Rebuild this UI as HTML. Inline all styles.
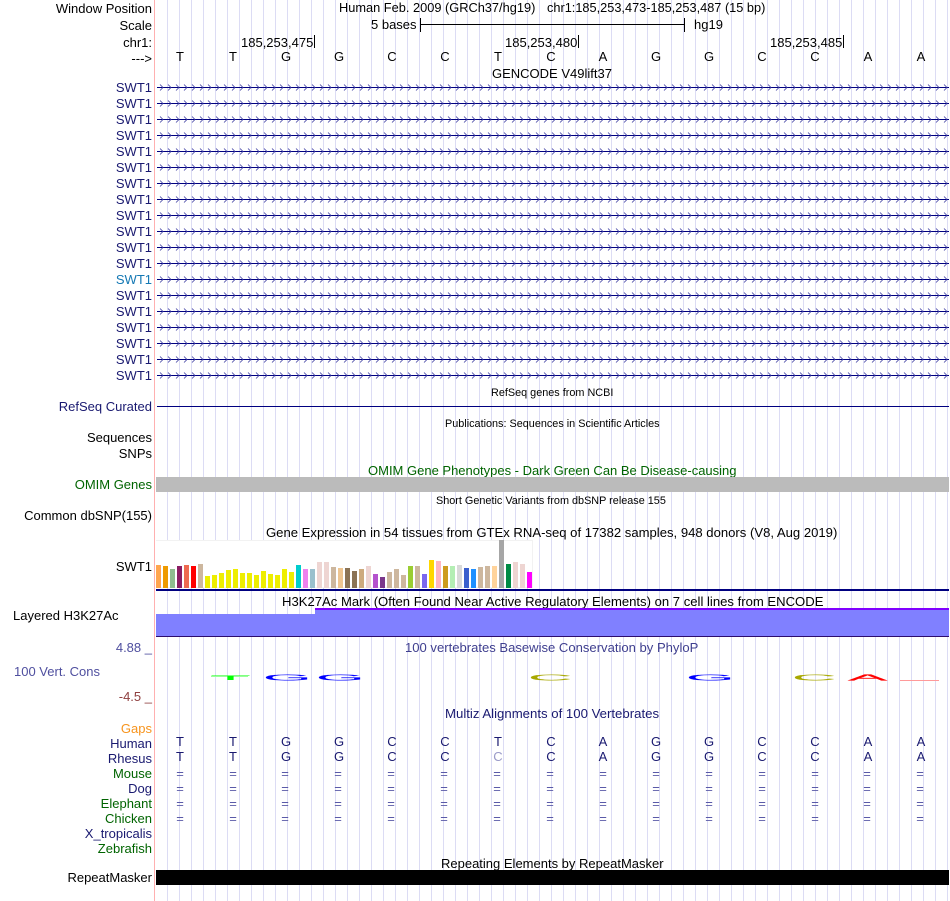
<!DOCTYPE html>
<html><head><meta charset="utf-8"><style>
html,body{margin:0;padding:0;background:#fff}
#p{position:relative;width:950px;height:901px;overflow:hidden;background:#fff;font:13px/14px "Liberation Sans",sans-serif;color:#000}
#p div{position:absolute}
.g{left:167px;top:0;width:783px;height:901px;background:repeating-linear-gradient(90deg,#dcdcf4 0,#dcdcf4 1px,transparent 1px,transparent 12px)}
.l{right:798px;white-space:nowrap;text-align:right;font-size:13px;margin-top:1px}
.t{white-space:nowrap;margin-top:1px}
.n{color:#191970}.d{color:#006400}
.s{font-size:10.85px}
.b{width:20px;text-align:center;font-size:13px}
.e{width:20px;text-align:center;color:#5a5aa8;font-size:13px}
.h{color:#191970}
.r{bottom:313px;width:5px}
</style></head><body><div id="p">
<div class="g"></div>
<div style="left:154px;top:0;width:1px;height:901px;background:#ffb0b0"></div>

<div class="l" style="top:1px">Window Position</div>
<div class="l" style="top:18px">Scale</div>
<div class="l" style="top:35px">chr1:</div>
<div class="l" style="top:51px">---&gt;</div>

<div class="t" style="left:339px;top:0;font-size:12.8px">Human Feb. 2009 (GRCh37/hg19)</div>
<div class="t" style="left:547px;top:0;font-size:12.75px">chr1:185,253,473-185,253,487 (15 bp)</div>
<div class="t" style="left:371px;top:17px">5 bases</div>
<div style="left:420px;top:18px;width:1px;height:14px;background:#000"></div>
<div style="left:420px;top:24px;width:264px;height:1px;background:#000"></div>
<div style="left:684px;top:18px;width:1px;height:14px;background:#000"></div>
<div class="t" style="left:694px;top:17px">hg19</div>
<div class="t" style="left:241px;top:35px">185,253,475</div><div style="left:314px;top:35px;width:1px;height:13px;background:#000"></div>
<div class="t" style="left:505px;top:35px">185,253,480</div><div style="left:578px;top:35px;width:1px;height:13px;background:#000"></div>
<div class="t" style="left:770px;top:35px">185,253,485</div><div style="left:843px;top:35px;width:1px;height:13px;background:#000"></div>

<div class="b" style="left:170px;top:50px">T</div><div class="b" style="left:223px;top:50px">T</div><div class="b" style="left:276px;top:50px">G</div><div class="b" style="left:329px;top:50px">G</div><div class="b" style="left:382px;top:50px">C</div><div class="b" style="left:435px;top:50px">C</div><div class="b" style="left:488px;top:50px">T</div><div class="b" style="left:541px;top:50px">C</div><div class="b" style="left:593px;top:50px">A</div><div class="b" style="left:646px;top:50px">G</div><div class="b" style="left:699px;top:50px">G</div><div class="b" style="left:752px;top:50px">C</div><div class="b" style="left:805px;top:50px">C</div><div class="b" style="left:858px;top:50px">A</div><div class="b" style="left:911px;top:50px">A</div>

<div class="t" style="left:492px;top:66px">GENCODE V49lift37</div>

<div class="l n" style="top:80px">SWT1</div><div class="l n" style="top:96px">SWT1</div><div class="l n" style="top:112px">SWT1</div><div class="l n" style="top:128px">SWT1</div><div class="l n" style="top:144px">SWT1</div><div class="l n" style="top:160px">SWT1</div><div class="l n" style="top:176px">SWT1</div><div class="l n" style="top:192px">SWT1</div><div class="l n" style="top:208px">SWT1</div><div class="l n" style="top:224px">SWT1</div><div class="l n" style="top:240px">SWT1</div><div class="l n" style="top:256px">SWT1</div><div class="l" style="top:272px;color:#1478b4">SWT1</div><div class="l n" style="top:288px">SWT1</div><div class="l n" style="top:304px">SWT1</div><div class="l n" style="top:320px">SWT1</div><div class="l n" style="top:336px">SWT1</div><div class="l n" style="top:352px">SWT1</div><div class="l n" style="top:368px">SWT1</div>

<svg style="position:absolute;left:0;top:0" width="950" height="901">
<defs><pattern id="a" patternUnits="userSpaceOnUse" x="159" y="80" width="8" height="16">
<rect x="0" y="7" width="8" height="1" fill="#000080"/>
<path d="M1 4.500L4 7.500L1 10.500" fill="none" stroke="#3a3aa0" stroke-width=".75"/>
</pattern></defs>
<rect x="157" y="80" width="792" height="304" fill="url(#a)"/>
</svg>

<div class="t s" style="left:491px;top:385px">RefSeq genes from NCBI</div>
<div class="l n" style="top:399px">RefSeq Curated</div>
<div style="left:157px;top:406px;width:792px;height:1px;background:#000080"></div>
<div class="t s" style="left:445px;top:416px">Publications: Sequences in Scientific Articles</div>
<div class="l" style="top:430px">Sequences</div>
<div class="l" style="top:446px">SNPs</div>
<div class="t d" style="left:368px;top:463px">OMIM Gene Phenotypes - Dark Green Can Be Disease-causing</div>
<div class="l d" style="top:477px">OMIM Genes</div>
<div style="left:156px;top:477px;width:793px;height:15px;background:#bbb"></div>
<div class="t s" style="left:436px;top:493px">Short Genetic Variants from dbSNP release 155</div>
<div class="l" style="top:508px">Common dbSNP(155)</div>
<div class="t" style="left:266px;top:525px;font-size:13.1px">Gene Expression in 54 tissues from GTEx RNA-seq of 17382 samples, 948 donors (V8, Aug 2019)</div>
<div class="l" style="top:559px">SWT1</div>

<div style="left:156px;top:540px;width:377px;height:48px;background:#fff;border:1px solid #f2f2f2;border-left:0;box-sizing:border-box"></div>
<div class="r" style="left:156px;height:23px;background:#ffa54f"></div><div class="r" style="left:163px;height:22px;background:#ee9a00"></div><div class="r" style="left:170px;height:19px;background:#8fbc8f"></div><div class="r" style="left:177px;height:22px;background:#8b1c62"></div><div class="r" style="left:184px;height:23px;background:#ee6a50"></div><div class="r" style="left:191px;height:22px;background:#f00"></div><div class="r" style="left:198px;height:24px;background:#cdb79e"></div><div class="r" style="left:205px;height:12px;background:#ee0"></div><div class="r" style="left:212px;height:13px;background:#ee0"></div><div class="r" style="left:219px;height:15px;background:#ee0"></div><div class="r" style="left:226px;height:18px;background:#ee0"></div><div class="r" style="left:233px;height:19px;background:#ee0"></div><div class="r" style="left:240px;height:15px;background:#ee0"></div><div class="r" style="left:247px;height:15px;background:#ee0"></div><div class="r" style="left:254px;height:13px;background:#ee0"></div><div class="r" style="left:261px;height:17px;background:#ee0"></div><div class="r" style="left:268px;height:14px;background:#ee0"></div><div class="r" style="left:275px;height:13px;background:#ee0"></div><div class="r" style="left:282px;height:19px;background:#ee0"></div><div class="r" style="left:289px;height:16px;background:#ee0"></div><div class="r" style="left:296px;height:23px;background:#00cdcd"></div><div class="r" style="left:303px;height:19px;background:#ee82ee"></div><div class="r" style="left:310px;height:19px;background:#9ac0cd"></div><div class="r" style="left:317px;height:26px;background:#eed5d2"></div><div class="r" style="left:324px;height:26px;background:#eed5d2"></div><div class="r" style="left:331px;height:21px;background:#cdb79e"></div><div class="r" style="left:338px;height:20px;background:#eec591"></div><div class="r" style="left:345px;height:20px;background:#8b7355"></div><div class="r" style="left:352px;height:17px;background:#8b7355"></div><div class="r" style="left:359px;height:19px;background:#cdaa7d"></div><div class="r" style="left:366px;height:22px;background:#eed5d2"></div><div class="r" style="left:373px;height:14px;background:#b452cd"></div><div class="r" style="left:380px;height:11px;background:#7a378b"></div><div class="r" style="left:387px;height:16px;background:#cdb79e"></div><div class="r" style="left:394px;height:19px;background:#cdb79e"></div><div class="r" style="left:401px;height:13px;background:#cdb79e"></div><div class="r" style="left:408px;height:22px;background:#9acd32"></div><div class="r" style="left:415px;height:22px;background:#cdb79e"></div><div class="r" style="left:422px;height:14px;background:#7a67ee"></div><div class="r" style="left:429px;height:28px;background:#ffd700"></div><div class="r" style="left:436px;height:27px;background:#ffb6c1"></div><div class="r" style="left:443px;height:22px;background:#cd9b1d"></div><div class="r" style="left:450px;height:22px;background:#b4eeb4"></div><div class="r" style="left:457px;height:23px;background:#d9d9d9"></div><div class="r" style="left:464px;height:20px;background:#3a5fcd"></div><div class="r" style="left:471px;height:19px;background:#1e90ff"></div><div class="r" style="left:478px;height:21px;background:#cdb79e"></div><div class="r" style="left:485px;height:22px;background:#cdb79e"></div><div class="r" style="left:492px;height:22px;background:#ffd39b"></div><div class="r" style="left:499px;height:48px;background:#a6a6a6"></div><div class="r" style="left:506px;height:24px;background:#008b45"></div><div class="r" style="left:513px;height:26px;background:#eed5d2"></div><div class="r" style="left:520px;height:24px;background:#eed5d2"></div><div class="r" style="left:527px;height:16px;background:#f0f"></div>
<div style="left:156px;top:589px;width:793px;height:2px;background:#000080"></div>

<div class="t" style="left:282px;top:594px;font-size:13.1px">H3K27Ac Mark (Often Found Near Active Regulatory Elements) on 7 cell lines from ENCODE</div>
<div style="left:315px;top:608px;width:634px;height:2px;background:#8000ff"></div>
<div style="left:315px;top:610px;width:634px;height:4px;background:#8080ff"></div>
<div style="left:156px;top:614px;width:793px;height:22px;background:#8080ff"></div>
<div style="left:156px;top:636px;width:793px;height:1px;background:#2c0c6c"></div>
<div class="t" style="left:13px;top:608px">Layered H3K27Ac</div>

<div class="l" style="top:640px;color:#4f4f9f">4.88 _</div>
<div class="t" style="left:14px;top:664px;color:#4f4f9f">100 Vert. Cons</div>
<div class="l" style="top:689px;color:#8f3f3f">-4.5 _</div>
<div class="t" style="left:405px;top:640px;color:#3f3f8f;font-size:13.07px">100 vertebrates Basewise Conservation by PhyloP</div>

<svg style="position:absolute;left:0;top:0" width="950" height="901" font-family="Liberation Sans" font-size="12">
<rect x="211" y="676" width="37" height="1" fill="#9f9"/>
<text transform="translate(210,680) scale(5.6,.5)" fill="#0f0">T</text>
<text transform="translate(263,680.3) scale(5.2,.65)" fill="#00f" stroke="#00f" stroke-width=".12">G</text>
<text transform="translate(316,680.3) scale(5.2,.65)" fill="#00f" stroke="#00f" stroke-width=".12">G</text>
<text transform="translate(686,680.3) scale(5.2,.65)" fill="#00f" stroke="#00f" stroke-width=".12">G</text>
<text transform="translate(528,680.3) scale(5.1,.65)" fill="#a8a800" stroke="#a8a800" stroke-width=".12">C</text>
<text transform="translate(792,680.3) scale(5.1,.65)" fill="#a8a800" stroke="#a8a800" stroke-width=".12">C</text>
<text transform="translate(848,680.3) scale(4.9,.65)" fill="#f00" stroke="#f00" stroke-width=".2">A</text>
<rect x="900" y="680" width="39" height="1" fill="#ff9a9a"/>
</svg>

<div class="t n" style="left:445px;top:706px;font-size:13.2px">Multiz Alignments of 100 Vertebrates</div>
<div class="l" style="top:721px;color:#f7941d">Gaps</div>
<div class="l n" style="top:736px">Human</div>
<div class="l n" style="top:751px">Rhesus</div>
<div class="l d" style="top:766px">Mouse</div>
<div class="l n" style="top:781px">Dog</div>
<div class="l d" style="top:796px">Elephant</div>
<div class="l d" style="top:811px">Chicken</div>
<div class="l n" style="top:826px">X_tropicalis</div>
<div class="l d" style="top:841px">Zebrafish</div>

<div class="b h" style="left:170px;top:735px">T</div><div class="b h" style="left:223px;top:735px">T</div><div class="b h" style="left:276px;top:735px">G</div><div class="b h" style="left:329px;top:735px">G</div><div class="b h" style="left:382px;top:735px">C</div><div class="b h" style="left:435px;top:735px">C</div><div class="b h" style="left:488px;top:735px">T</div><div class="b h" style="left:541px;top:735px">C</div><div class="b h" style="left:593px;top:735px">A</div><div class="b h" style="left:646px;top:735px">G</div><div class="b h" style="left:699px;top:735px">G</div><div class="b h" style="left:752px;top:735px">C</div><div class="b h" style="left:805px;top:735px">C</div><div class="b h" style="left:858px;top:735px">A</div><div class="b h" style="left:911px;top:735px">A</div>
<div class="b h" style="left:170px;top:750px">T</div><div class="b h" style="left:223px;top:750px">T</div><div class="b h" style="left:276px;top:750px">G</div><div class="b h" style="left:329px;top:750px">G</div><div class="b h" style="left:382px;top:750px">C</div><div class="b h" style="left:435px;top:750px">C</div><div class="b" style="left:488px;top:750px;color:#9a9ac8">C</div><div class="b h" style="left:541px;top:750px">C</div><div class="b h" style="left:593px;top:750px">A</div><div class="b h" style="left:646px;top:750px">G</div><div class="b h" style="left:699px;top:750px">G</div><div class="b h" style="left:752px;top:750px">C</div><div class="b h" style="left:805px;top:750px">C</div><div class="b h" style="left:858px;top:750px">A</div><div class="b h" style="left:911px;top:750px">A</div>

<div class="e" style="left:170px;top:767px">=<br><span style="display:block;margin-top:1px">=</span><span style="display:block;margin-top:1px">=</span><span style="display:block;margin-top:1px">=</span></div>
<div class="e" style="left:223px;top:767px">=<br><span style="display:block;margin-top:1px">=</span><span style="display:block;margin-top:1px">=</span><span style="display:block;margin-top:1px">=</span></div>
<div class="e" style="left:275px;top:767px">=<br><span style="display:block;margin-top:1px">=</span><span style="display:block;margin-top:1px">=</span><span style="display:block;margin-top:1px">=</span></div>
<div class="e" style="left:328px;top:767px">=<br><span style="display:block;margin-top:1px">=</span><span style="display:block;margin-top:1px">=</span><span style="display:block;margin-top:1px">=</span></div>
<div class="e" style="left:381px;top:767px">=<br><span style="display:block;margin-top:1px">=</span><span style="display:block;margin-top:1px">=</span><span style="display:block;margin-top:1px">=</span></div>
<div class="e" style="left:434px;top:767px">=<br><span style="display:block;margin-top:1px">=</span><span style="display:block;margin-top:1px">=</span><span style="display:block;margin-top:1px">=</span></div>
<div class="e" style="left:487px;top:767px">=<br><span style="display:block;margin-top:1px">=</span><span style="display:block;margin-top:1px">=</span><span style="display:block;margin-top:1px">=</span></div>
<div class="e" style="left:540px;top:767px">=<br><span style="display:block;margin-top:1px">=</span><span style="display:block;margin-top:1px">=</span><span style="display:block;margin-top:1px">=</span></div>
<div class="e" style="left:593px;top:767px">=<br><span style="display:block;margin-top:1px">=</span><span style="display:block;margin-top:1px">=</span><span style="display:block;margin-top:1px">=</span></div>
<div class="e" style="left:646px;top:767px">=<br><span style="display:block;margin-top:1px">=</span><span style="display:block;margin-top:1px">=</span><span style="display:block;margin-top:1px">=</span></div>
<div class="e" style="left:699px;top:767px">=<br><span style="display:block;margin-top:1px">=</span><span style="display:block;margin-top:1px">=</span><span style="display:block;margin-top:1px">=</span></div>
<div class="e" style="left:752px;top:767px">=<br><span style="display:block;margin-top:1px">=</span><span style="display:block;margin-top:1px">=</span><span style="display:block;margin-top:1px">=</span></div>
<div class="e" style="left:805px;top:767px">=<br><span style="display:block;margin-top:1px">=</span><span style="display:block;margin-top:1px">=</span><span style="display:block;margin-top:1px">=</span></div>
<div class="e" style="left:857px;top:767px">=<br><span style="display:block;margin-top:1px">=</span><span style="display:block;margin-top:1px">=</span><span style="display:block;margin-top:1px">=</span></div>
<div class="e" style="left:910px;top:767px">=<br><span style="display:block;margin-top:1px">=</span><span style="display:block;margin-top:1px">=</span><span style="display:block;margin-top:1px">=</span></div>

<div class="t" style="left:441px;top:856px">Repeating Elements by RepeatMasker</div>
<div class="l" style="top:870px">RepeatMasker</div>
<div style="left:156px;top:870px;width:793px;height:15px;background:#000"></div>
</div></body></html>
